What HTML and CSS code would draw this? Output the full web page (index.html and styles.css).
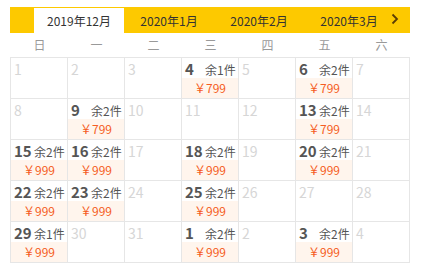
FILE: index.html
```html
<!DOCTYPE html>
<html lang="zh">
<head>
<meta charset="utf-8">
<link rel="stylesheet" href="styles.css">
</head>
<body>
<div class="cal">
  <div class="tabs">
    <div class="prev"></div>
    <div class="tab active">2019年12月</div>
    <div class="tab">2020年1月</div>
    <div class="tab">2020年2月</div>
    <div class="tab">2020年3月</div>
    <div class="next"><svg width="8" height="12" viewBox="0 0 8 12"><polyline points="1.5,1.5 6,6 1.5,10.5" fill="none" stroke="#5a3d05" stroke-width="1.8"/></svg></div>
  </div>
  <div class="week">
    <span>日</span><span>一</span><span>二</span><span>三</span><span>四</span><span>五</span><span>六</span>
  </div>
  <div class="grid">
    <div class="cell"><div class="top"><span class="d">1</span></div></div>
    <div class="cell"><div class="top"><span class="d">2</span></div></div>
    <div class="cell"><div class="top"><span class="d">3</span></div></div>
    <div class="cell on"><div class="top"><span class="n">4</span><span class="s">余1件</span></div><div class="p">￥799</div></div>
    <div class="cell"><div class="top"><span class="d">5</span></div></div>
    <div class="cell on"><div class="top"><span class="n">6</span><span class="s">余2件</span></div><div class="p">￥799</div></div>
    <div class="cell"><div class="top"><span class="d">7</span></div></div>

    <div class="cell"><div class="top"><span class="d">8</span></div></div>
    <div class="cell on"><div class="top"><span class="n">9</span><span class="s">余2件</span></div><div class="p">￥799</div></div>
    <div class="cell"><div class="top"><span class="d">10</span></div></div>
    <div class="cell"><div class="top"><span class="d">11</span></div></div>
    <div class="cell"><div class="top"><span class="d">12</span></div></div>
    <div class="cell on"><div class="top"><span class="n">13</span><span class="s">余2件</span></div><div class="p">￥799</div></div>
    <div class="cell"><div class="top"><span class="d">14</span></div></div>

    <div class="cell on"><div class="top"><span class="n">15</span><span class="s">余2件</span></div><div class="p">￥999</div></div>
    <div class="cell on"><div class="top"><span class="n">16</span><span class="s">余2件</span></div><div class="p">￥999</div></div>
    <div class="cell"><div class="top"><span class="d">17</span></div></div>
    <div class="cell on"><div class="top"><span class="n">18</span><span class="s">余2件</span></div><div class="p">￥999</div></div>
    <div class="cell"><div class="top"><span class="d">19</span></div></div>
    <div class="cell on"><div class="top"><span class="n">20</span><span class="s">余2件</span></div><div class="p">￥999</div></div>
    <div class="cell"><div class="top"><span class="d">21</span></div></div>

    <div class="cell on"><div class="top"><span class="n">22</span><span class="s">余2件</span></div><div class="p">￥999</div></div>
    <div class="cell on"><div class="top"><span class="n">23</span><span class="s">余2件</span></div><div class="p">￥999</div></div>
    <div class="cell"><div class="top"><span class="d">24</span></div></div>
    <div class="cell on"><div class="top"><span class="n">25</span><span class="s">余2件</span></div><div class="p">￥999</div></div>
    <div class="cell"><div class="top"><span class="d">26</span></div></div>
    <div class="cell"><div class="top"><span class="d">27</span></div></div>
    <div class="cell"><div class="top"><span class="d">28</span></div></div>

    <div class="cell on"><div class="top"><span class="n">29</span><span class="s">余1件</span></div><div class="p">￥999</div></div>
    <div class="cell"><div class="top"><span class="d">30</span></div></div>
    <div class="cell"><div class="top"><span class="d">31</span></div></div>
    <div class="cell on"><div class="top"><span class="n">1</span><span class="s">余2件</span></div><div class="p">￥999</div></div>
    <div class="cell"><div class="top"><span class="d">2</span></div></div>
    <div class="cell on"><div class="top"><span class="n">3</span><span class="s">余2件</span></div><div class="p">￥999</div></div>
    <div class="cell"><div class="top"><span class="d">4</span></div></div>
  </div>
</div>
</body>
</html>
```
FILE: styles.css
```css
html, body {
  margin: 0;
  padding: 0;
  background: #fff;
}
body {
  font-family: "Noto Sans CJK SC", "Open Sans", sans-serif;
  color: #555;
}
.cal {
  margin: 7px 0 0 10px;
  width: 400px;
}
.tabs {
  display: flex;
  height: 26px;
  background: #fdc900;
  padding-top: 1px;
  box-sizing: border-box;
}
.prev {
  width: 24px;
}
.tab {
  width: 90px;
  font-size: 12px;
  line-height: 25px;
  text-align: center;
  color: #333;
}
.tab.active {
  background: #fff;
}
.next {
  flex: 1;
  display: flex;
  align-items: center;
  padding: 0 0 3px 0;
  margin-left: -3px;
}
.week {
  display: grid;
  grid-template-columns: repeat(7, 57px);
  height: 24px;
  padding-left: 1px;
}
.week span {
  font-size: 12px;
  color: #999;
  text-align: center;
  line-height: 24px;
}
.grid {
  display: grid;
  grid-template-columns: repeat(7, 57px);
  grid-auto-rows: 41px;
  border-left: 1px solid #e6e6e6;
  border-top: 1px solid #e6e6e6;
}
.cell {
  border-right: 1px solid #e6e6e6;
  border-bottom: 1px solid #e6e6e6;
  display: flex;
  flex-direction: column;
}
.top {
  height: 20px;
  line-height: 20px;
  padding-left: 3px;
  white-space: nowrap;
}
.d {
  font-size: 14px;
  color: #d6d6d6;
}
.n {
  display: inline-block;
  min-width: 20px;
  font-size: 15px;
  font-weight: bold;
  color: #555;
}
.s {
  font-size: 12px;
  color: #555;
}
.p {
  flex: 1;
  background: #fff5ed;
  color: #f55d23;
  font-size: 12px;
  text-align: center;
  line-height: 20px;
}
```
